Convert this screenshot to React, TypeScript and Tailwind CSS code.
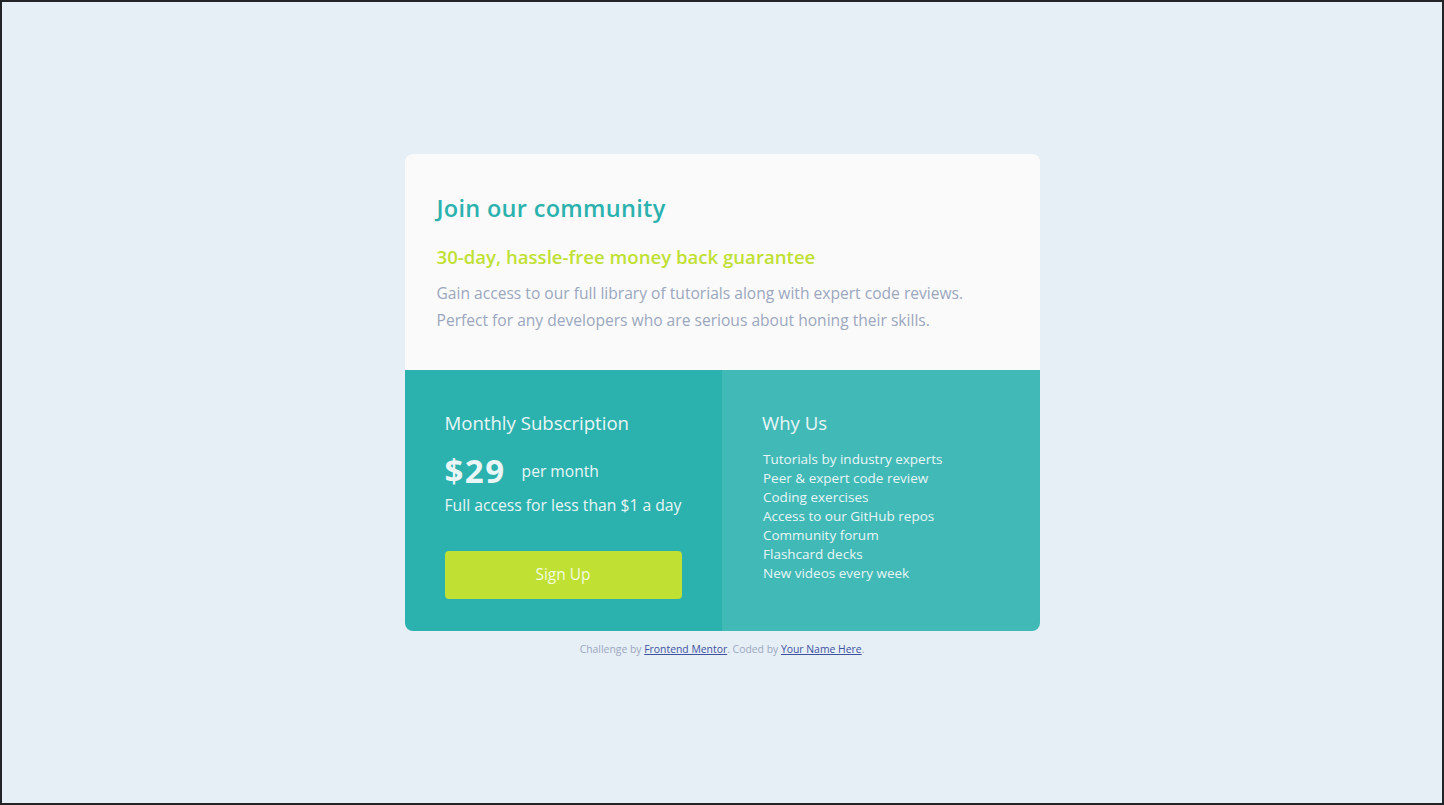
import React from "react";

const perks = [
  "Tutorials by industry experts",
  "Peer & expert code review",
  "Coding exercises",
  "Access to our GitHub repos",
  "Community forum",
  "Flashcard decks",
  "New videos every week",
];

export default function App() {
  return (
    <div
      className="h-[805px] w-full border-2 border-[#232427] bg-[#e6eff6] flex flex-col items-center pt-[152px]"
      style={{ fontFamily: '"Open Sans", "Liberation Sans", sans-serif' }}
    >
      <main className="w-[635px] rounded-[8px] overflow-hidden">
        {/* top */}
        <section className="bg-[#fafafa] h-[216px] pt-[38px] px-[31px]">
          <h1 className="text-[23.5px] leading-[32px] font-semibold text-[#2bb1ae] tracking-[0.3px] pl-[1px]">Join our community</h1>
          <h2 className="mt-[21px] text-[18.6px] leading-[24px] font-semibold text-[#c0e133] pl-[1px]">
            30-day, hassle-free money back guarantee
          </h2>
          <p className="mt-[11px] text-[15.6px] leading-[27px] text-[#9ba7be] pl-[1px]">
            Gain access to our full library of tutorials along with expert code reviews.
            <br />
            Perfect for any developers who are serious about honing their skills.
          </p>
        </section>

        {/* bottom */}
        <div className="grid grid-cols-2 h-[261px]">
          <section className="bg-[#2bb1ae] pt-[41px] pl-[40px] pr-[30px]">
            <h3 className="text-[18.6px] leading-[24px] font-medium text-[#eaf6f6]">Monthly Subscription</h3>
            <div className="mt-[16px] flex items-center h-[40px]">
              <span className="text-[33px] leading-[40px] font-bold text-[#eaf6f6] tracking-[1.5px]">$29</span>
              <span className="ml-[16px] text-[15.6px] text-[#eaf6f6] mt-[2px]">per month</span>
            </div>
            <p className="mt-[3px] text-[15.7px] leading-[22px] text-[#eaf6f6]">Full access for less than $1 a day</p>
            <button
              type="button"
              className="mt-[35px] w-[237px] h-[48px] rounded-[4px] bg-[#c0e133] text-[15.5px] font-medium text-[#f3fbe0]"
            >
              Sign Up
            </button>
          </section>
          <section className="bg-[#40b9b7] pt-[41px] pl-[40px] pr-[30px]">
            <h3 className="text-[18.6px] leading-[24px] font-medium text-[#eaf6f6]">Why Us</h3>
            <ul className="mt-[15px] pl-[1px]">
              {perks.map((p) => (
                <li key={p} className="text-[13.5px] leading-[19px] text-[#eaf6f6]">
                  {p}
                </li>
              ))}
            </ul>
          </section>
        </div>
      </main>
      <footer className="mt-[10px] text-[10.4px] leading-[16px] text-[#9ba7be]">
        Challenge by{" "}
        <a href="#" className="underline text-[#3e52a3]">
          Frontend Mentor
        </a>
        . Coded by{" "}
        <a href="#" className="underline text-[#3e52a3]">
          Your Name Here
        </a>
        .
      </footer>
    </div>
  );
}
